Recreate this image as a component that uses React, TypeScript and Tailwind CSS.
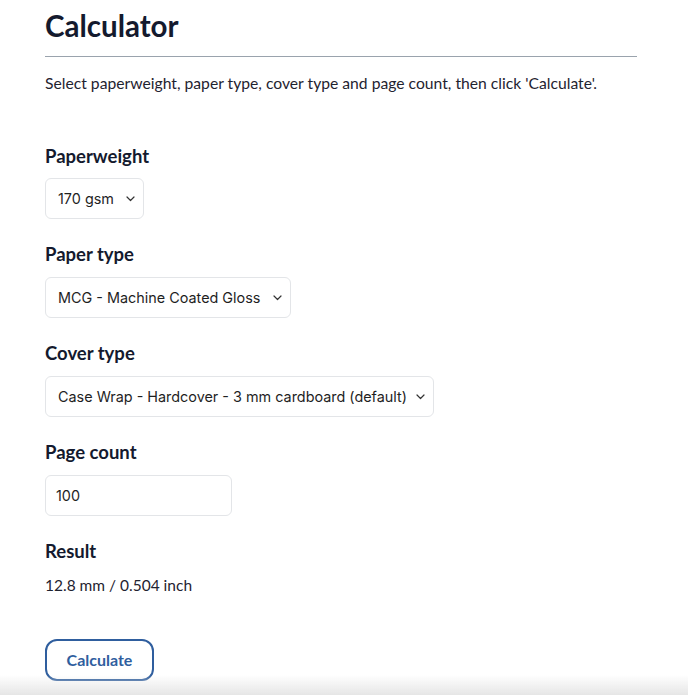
import React from "react";

const Chevron = () => (
  <svg
    className="pointer-events-none absolute right-[9px] top-1/2 -translate-y-1/2"
    width="9"
    height="6"
    viewBox="0 0 9 6"
    fill="none"
  >
    <path d="M1 1l3.5 3.5L8 1" stroke="#333" strokeWidth="1.2" strokeLinecap="round" strokeLinejoin="round" />
  </svg>
);

const Select = ({ value, width }: { value: string; width: string }) => (
  <div className={`relative ${width}`}>
    <select
      defaultValue={value}
      className="h-[41px] w-full appearance-none rounded-[6px] border border-[#e3e5e8] bg-white pl-[12px] pr-[24px] font-['Inter',sans-serif] text-[14.4px] text-[#1f1f1f] outline-none"
    >
      <option>{value}</option>
    </select>
    <Chevron />
  </div>
);

const Label = ({ children }: { children: React.ReactNode }) => (
  <h3 className="text-[18.5px] font-bold leading-[22px] text-[#141a2e]">{children}</h3>
);

export default function App() {
  return (
    <div className="relative min-h-[695px] bg-white font-['Lato',sans-serif] text-[#1f2330]">
      <div className="px-[45px] pt-[9px]">
        {/* Header */}
        <h1 className="text-[29.5px] font-bold leading-[34px] text-[#141a2e]">Calculator</h1>
        <hr className="mt-[13px] w-[592px] border-t border-[#9aa3ad]" />
        <p className="mt-[16px] text-[15.7px] leading-[20px]">
          Select paperweight, paper type, cover type and page count, then click 'Calculate'.
        </p>

        {/* Paperweight */}
        <div className="mt-[52px]">
          <Label>Paperweight</Label>
          <div className="mt-[11px]">
            <Select value="170 gsm" width="w-[99px]" />
          </div>
        </div>

        {/* Paper type */}
        <div className="mt-[24px]">
          <Label>Paper type</Label>
          <div className="mt-[12px]">
            <Select value="MCG - Machine Coated Gloss" width="w-[246px]" />
          </div>
        </div>

        {/* Cover type */}
        <div className="mt-[24px]">
          <Label>Cover type</Label>
          <div className="mt-[12px]">
            <Select value="Case Wrap - Hardcover - 3 mm cardboard (default)" width="w-[389px]" />
          </div>
        </div>

        {/* Page count */}
        <div className="mt-[24px]">
          <Label>Page count</Label>
          <input
            defaultValue="100"
            className="mt-[12px] h-[41px] w-[187px] rounded-[6px] border border-[#e3e5e8] bg-white px-[10px] font-['Inter',sans-serif] text-[14.4px] text-[#1f1f1f] outline-none"
          />
        </div>

        {/* Result */}
        <div className="mt-[24px]">
          <Label>Result</Label>
          <p className="mt-[13px] text-[15.5px] leading-[20px]">12.8 mm / 0.504 inch</p>
        </div>

        {/* Calculate */}
        <button className="mt-[44px] h-[42px] w-[109px] rounded-[12px] border-2 border-[#2f5e9e] bg-white text-[16px] font-bold text-[#2f5e9e]">
          Calculate
        </button>
      </div>

      <div className="pointer-events-none fixed bottom-0 left-0 h-[20px] w-full bg-gradient-to-b from-white/0 to-[#e6e6e6]" />
    </div>
  );
}
